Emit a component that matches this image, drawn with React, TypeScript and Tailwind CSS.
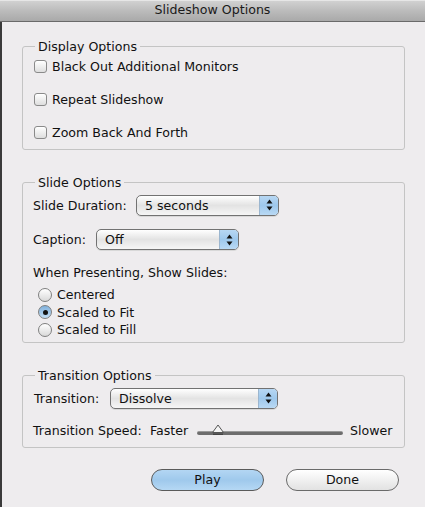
import React from "react";

function Group({ title, className = "", children }: { title: string; className?: string; children: React.ReactNode }) {
  return (
    <fieldset className={`ml-[20px] w-[383px] rounded-[3px] border border-[#c4c4c4] pl-[10px] ${className}`}>
      <legend className="ml-[2px] px-[3px] leading-[15px]">{title}</legend>
      {children}
    </fieldset>
  );
}

function Checkbox({ label }: { label: string }) {
  return (
    <div className="ml-[1px] flex h-[15px] items-center">
      <span className="box-border h-[13px] w-[13px] rounded-[3px] border border-[#8a8a8a] bg-gradient-to-b from-white to-[#dedede] shadow-[inset_0_1px_0_#fff]" />
      <span className="ml-[5px] leading-[15px]">{label}</span>
    </div>
  );
}

function Radio({ label, checked = false }: { label: string; checked?: boolean }) {
  return (
    <div className="ml-[5px] flex h-[17.5px] items-center">
      <span
        className={`box-border flex h-[14px] w-[14px] items-center justify-center rounded-full border border-[#7f7f7f] ${
          checked ? "bg-gradient-to-b from-[#7fb0dc] to-[#c3def4]" : "bg-gradient-to-b from-white to-[#d9d9d9]"
        }`}
      >
        {checked && <span className="h-[5px] w-[5px] rounded-full bg-[#111]" />}
      </span>
      <span className="ml-[5px] leading-[15px]">{label}</span>
    </div>
  );
}

function Arrows() {
  return (
    <svg width="7" height="12" viewBox="0 0 7 12">
      <path d="M3.5 0.5 L6.5 4.5 L0.5 4.5 Z" fill="#111" />
      <path d="M3.5 11.5 L6.5 7.5 L0.5 7.5 Z" fill="#111" />
    </svg>
  );
}

function Popup({ value, widthClass }: { value: string; widthClass: string }) {
  return (
    <div
      className={`box-border flex h-[21px] ${widthClass} overflow-hidden rounded-[5px] border border-[#727272] bg-gradient-to-b from-white via-[#e3e3e3] to-[#f6f6f6] shadow-[0_1px_0_#d8d8d8]`}
    >
      <div className="flex flex-1 items-center pl-[8px] leading-[15px]">{value}</div>
      <div className="flex w-[19px] items-center justify-center border-l border-[#9bb6cf] bg-gradient-to-b from-[#b7d7f3] via-[#9ec8ec] to-[#b9d9f4]">
        <Arrows />
      </div>
    </div>
  );
}

function Thumb() {
  return (
    <svg width="14" height="12" viewBox="0 0 14 12">
      <path d="M7 1 L12.5 8.5 L1.5 8.5 Z" fill="#f4f4f4" stroke="#555" strokeWidth="1" />
      <rect x="2" y="9.5" width="10" height="1.5" fill="#444" />
    </svg>
  );
}

export default function App() {
  return (
    <div className="flex h-[507px] w-[425px] flex-col bg-[#eeecee] font-['DejaVu_Sans',sans-serif] text-[12.6px] text-[#111]">
      <div className="flex h-[22px] shrink-0 items-center justify-center border-b border-[#6a6a6a] bg-gradient-to-b from-[#d3d3d3] via-[#bcbcbc] to-[#a9a9a9] text-[12.6px] text-[#1a1a1a] shadow-[inset_0_1px_0_#e6e6e6]">
        Slideshow Options
      </div>
      <div className="flex flex-1 flex-col border-l-2 border-[#3a3a3a]">
        <Group title="Display Options" className="mt-[17px] pt-[5px] pb-[9px]">
          <div className="flex flex-col gap-[18px]">
            <Checkbox label="Black Out Additional Monitors" />
            <Checkbox label="Repeat Slideshow" />
            <Checkbox label="Zoom Back And Forth" />
          </div>
        </Group>

        <Group title="Slide Options" className="mt-[25px] pt-[5px] pb-[3px]">
          <div className="flex h-[20px] items-center">
            <span className="w-[103px] leading-[15px]">Slide Duration:</span>
            <Popup value="5 seconds" widthClass="w-[143px]" />
          </div>
          <div className="mt-[14px] flex h-[21px] items-center">
            <span className="w-[63px] leading-[15px]">Caption:</span>
            <Popup value="Off" widthClass="w-[143px]" />
          </div>
          <div className="mt-[15px] leading-[15px]">When Presenting, Show Slides:</div>
          <div className="mt-[6px] flex flex-col">
            <Radio label="Centered" />
            <Radio label="Scaled to Fit" checked />
            <Radio label="Scaled to Fill" />
          </div>
        </Group>

        <Group title="Transition Options" className="mt-[25px] pt-[5px] pb-[8px]">
          <div className="flex h-[21px] items-center">
            <span className="ml-[1px] w-[76px] leading-[15px]">Transition:</span>
            <Popup value="Dissolve" widthClass="w-[168px]" />
          </div>
          <div className="mt-[14px] flex h-[16px] items-center">
            <span className="w-[117px] leading-[15px]">Transition Speed:</span>
            <span className="w-[47px] leading-[15px]">Faster</span>
            <div className="relative flex h-[16px] w-[146px] items-center">
              <div className="mt-[4px] h-[4px] w-full rounded-full border-t border-[#9a9a9a] bg-[#6d6d6d]" />
              <div className="absolute left-[14px] top-[1px]">
                <Thumb />
              </div>
            </div>
            <span className="ml-[7px] leading-[15px]">Slower</span>
          </div>
        </Group>

        <div className="mt-[21px] flex justify-end gap-[22px] pr-[26px]">
          <button className="box-border flex h-[22px] w-[113px] items-center justify-center rounded-full border border-[#5a5a5a] bg-gradient-to-b from-[#b3d6f3] via-[#9fc9ec] to-[#b5d8f4] leading-[15px] text-[#111]">
            Play
          </button>
          <button className="box-border flex h-[22px] w-[113px] items-center justify-center rounded-full border border-[#6a6a6a] bg-gradient-to-b from-white via-[#f0f0f0] to-[#e2e2e2] leading-[15px] text-[#111]">
            Done
          </button>
        </div>
      </div>
    </div>
  );
}
